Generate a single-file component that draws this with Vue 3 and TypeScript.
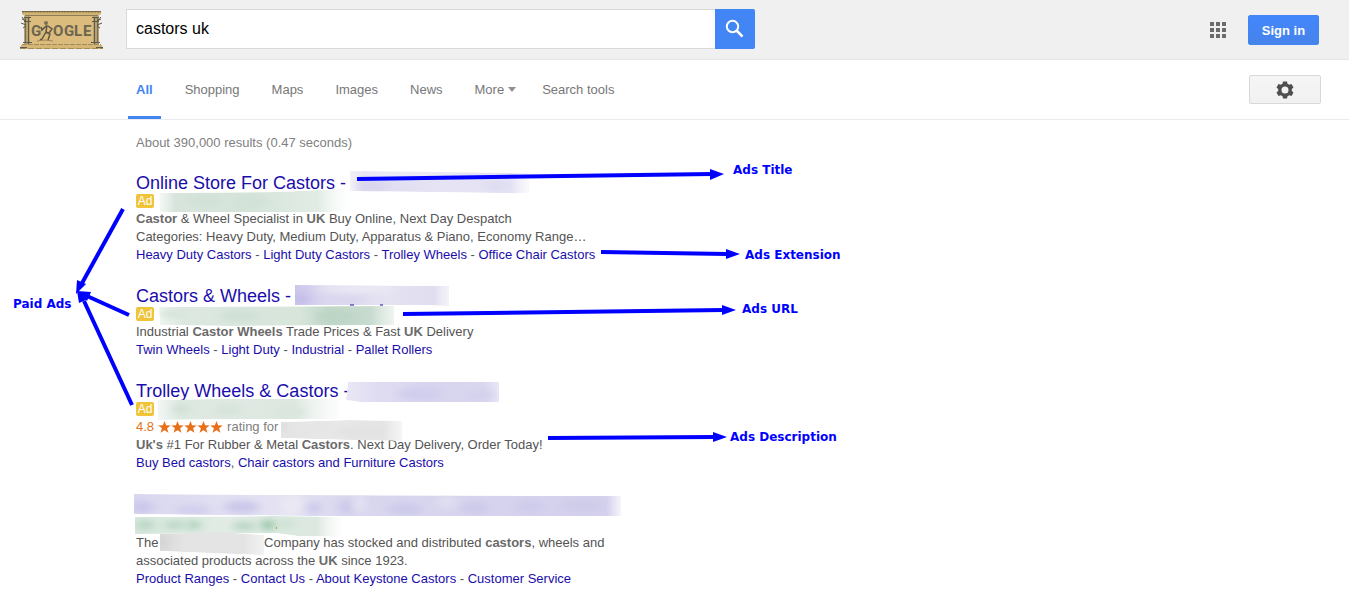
<script setup lang="ts">
import { ref } from 'vue'

interface Piece { text: string; bold?: boolean }
interface Result {
  title: string
  rating?: string
  lines: Piece[][]
  links: string[]
  separator: string
}
interface Stop { at: number; color: string; opacity?: number }
interface Blob { x: number; y: number; rx: number; ry: number; color: string }
interface Smudge { id: string; points: string; stops: Stop[]; blobs: Blob[] }
interface Arrow { x1: number; y1: number; x2: number; y2: number; head: string }

const query = ref('castors uk')
const tabs = ['All', 'Shopping', 'Maps', 'Images', 'News']

const results: Result[] = [
  {
    title: 'Online Store For Castors -',
    lines: [
      [{ text: 'Castor', bold: true }, { text: ' & Wheel Specialist in ' }, { text: 'UK', bold: true }, { text: ' Buy Online, Next Day Despatch' }],
      [{ text: 'Categories: Heavy Duty, Medium Duty, Apparatus & Piano, Economy Range…' }],
    ],
    links: ['Heavy Duty Castors', 'Light Duty Castors', 'Trolley Wheels', 'Office Chair Castors'],
    separator: ' - ',
  },
  {
    title: 'Castors & Wheels -',
    lines: [
      [{ text: 'Industrial ' }, { text: 'Castor Wheels', bold: true }, { text: ' Trade Prices & Fast ' }, { text: 'UK', bold: true }, { text: ' Delivery' }],
    ],
    links: ['Twin Wheels', 'Light Duty', 'Industrial', 'Pallet Rollers'],
    separator: ' - ',
  },
  {
    title: 'Trolley Wheels & Castors -',
    rating: '4.8',
    lines: [
      [{ text: "Uk's", bold: true }, { text: ' #1 For Rubber & Metal ' }, { text: 'Castors', bold: true }, { text: '. Next Day Delivery, Order Today!' }],
    ],
    links: ['Buy Bed castors', 'Chair castors and Furniture Castors'],
    separator: ', ',
  },
]

const organicLinks = ['Product Ranges', 'Contact Us', 'About Keystone Castors', 'Customer Service']

const smudges: Smudge[] = [
  {
    id: 'title-1', points: '350,171 440,172 529,173 529,193 500,193 350,191',
    stops: [{ at: 0, color: '#e9e8f2', opacity: 0.6 }, { at: 8, color: '#dedbf0' }, { at: 55, color: '#e6e4f4' }, { at: 90, color: '#e4e2f3' }, { at: 100, color: '#f4f3fa', opacity: 0.5 }],
    blobs: [{ x: 372, y: 186, rx: 14, ry: 6, color: '#d8d5ee' }, { x: 496, y: 186, rx: 12, ry: 5, color: '#dddbf1' }, { x: 400, y: 174, rx: 60, ry: 3, color: '#f1f0f7' }],
  },
  {
    id: 'url-1', points: '159,193 280,192 355,188 358,209 330,212 160,212',
    stops: [{ at: 0, color: '#dfe9e2', opacity: 0.3 }, { at: 8, color: '#d8e4dc' }, { at: 45, color: '#d5e4da' }, { at: 80, color: '#e2ece5' }, { at: 100, color: '#ffffff', opacity: 0 }],
    blobs: [{ x: 205, y: 201, rx: 16, ry: 6, color: '#d0e1d6' }, { x: 250, y: 202, rx: 18, ry: 7, color: '#d2e2d8' }],
  },
  {
    id: 'title-2', points: '295,285 449,286 449,306 424,305 295,305',
    stops: [{ at: 0, color: '#cdc7ec' }, { at: 20, color: '#dad6f0' }, { at: 60, color: '#e5e3f2' }, { at: 90, color: '#dfddef' }, { at: 100, color: '#eeedf7', opacity: 0.7 }],
    blobs: [{ x: 300, y: 299, rx: 10, ry: 6, color: '#c5bee8' }, { x: 347, y: 300, rx: 18, ry: 5, color: '#dad7f0' }, { x: 355, y: 289, rx: 40, ry: 3, color: '#efeef5' }],
  },
  {
    id: 'url-2', points: '159,307 394,306 394,325 230,326 160,325',
    stops: [{ at: 0, color: '#e2ece5', opacity: 0.5 }, { at: 10, color: '#dce8e0' }, { at: 60, color: '#d7e5db' }, { at: 72, color: '#c1d8c9' }, { at: 90, color: '#c7dbce' }, { at: 100, color: '#e3ece6', opacity: 0.6 }],
    blobs: [{ x: 172, y: 314, rx: 12, ry: 4, color: '#d3e3d8' }, { x: 240, y: 316, rx: 20, ry: 6, color: '#cfe0d5' }, { x: 336, y: 317, rx: 20, ry: 7, color: '#bdd5c6' }],
  },
  {
    id: 'title-3', points: '348,382 499,382 499,402 360,402 346,400',
    stops: [{ at: 0, color: '#e7e5f4', opacity: 0.9 }, { at: 20, color: '#dfdcf2' }, { at: 55, color: '#d8d5ef' }, { at: 90, color: '#d9d7ef' }, { at: 100, color: '#e8e7f5' }],
    blobs: [{ x: 420, y: 394, rx: 22, ry: 6, color: '#d0cced' }, { x: 480, y: 395, rx: 14, ry: 6, color: '#d3d1ec' }],
  },
  {
    id: 'url-3', points: '158,400 218,399 339,399 339,419 236,419 158,420',
    stops: [{ at: 0, color: '#eaf0ec', opacity: 0.6 }, { at: 12, color: '#dce8e0' }, { at: 40, color: '#e0e9e3' }, { at: 75, color: '#dde7e0' }, { at: 100, color: '#f6f9f7', opacity: 0.4 }],
    blobs: [{ x: 180, y: 409, rx: 10, ry: 3, color: '#cadecf' }, { x: 228, y: 410, rx: 14, ry: 6, color: '#d6e4da' }, { x: 290, y: 412, rx: 16, ry: 5, color: '#d9e5dd' }],
  },
  {
    id: 'name-3', points: '281,422 350,420 402,421 402,441 350,440 281,438',
    stops: [{ at: 0, color: '#e4e4e4' }, { at: 50, color: '#e8e8e8' }, { at: 85, color: '#e5e5e5' }, { at: 100, color: '#f6f6f6' }],
    blobs: [{ x: 282, y: 426, rx: 3, ry: 4, color: '#d4d4d4' }, { x: 360, y: 432, rx: 24, ry: 6, color: '#e2e2e2' }],
  },
  {
    id: 'title-4', points: '134,494 300,495 621,496 621,516 310,516 134,514',
    stops: [{ at: 0, color: '#d9d7f0' }, { at: 15, color: '#e0def1' }, { at: 30, color: '#e4e2f2' }, { at: 45, color: '#d9d7ee' }, { at: 75, color: '#d6d3ee' }, { at: 97, color: '#d4d1ec' }, { at: 100, color: '#f6f5fb' }],
    blobs: [
      { x: 142, y: 507, rx: 12, ry: 6, color: '#cbc6eb' }, { x: 193, y: 510, rx: 18, ry: 5, color: '#d1cdec' }, { x: 242, y: 507, rx: 18, ry: 6, color: '#cac6ea' },
      { x: 292, y: 505, rx: 11, ry: 11, color: '#eae9f3' }, { x: 314, y: 508, rx: 7, ry: 6, color: '#cbc8ea' }, { x: 346, y: 507, rx: 8, ry: 8, color: '#cdcaeb' },
      { x: 360, y: 503, rx: 5, ry: 10, color: '#e5e3f2' }, { x: 405, y: 509, rx: 17, ry: 5, color: '#cac7ea' }, { x: 447, y: 502, rx: 10, ry: 6, color: '#e1dff0' },
      { x: 475, y: 508, rx: 14, ry: 5, color: '#cbc7e9' }, { x: 530, y: 507, rx: 15, ry: 6, color: '#cecaeb' }, { x: 582, y: 506, rx: 22, ry: 7, color: '#cecce9' },
    ],
  },
  {
    id: 'url-4', points: '135,517 275,516 349,517 345,536 298,536 275,533 135,534',
    stops: [{ at: 0, color: '#d8e8dd' }, { at: 25, color: '#dceae1' }, { at: 45, color: '#e3ece6' }, { at: 64, color: '#dbe9e0' }, { at: 85, color: '#dce8e0' }, { at: 100, color: '#ffffff', opacity: 0 }],
    blobs: [{ x: 145, y: 525, rx: 9, ry: 4, color: '#b2d2bd' }, { x: 175, y: 525, rx: 11, ry: 3, color: '#b0d2bc' }, { x: 194, y: 525, rx: 7, ry: 4, color: '#aacfb8' }, { x: 244, y: 526, rx: 12, ry: 4, color: '#b6d4c1' }, { x: 268, y: 525, rx: 7, ry: 5, color: '#98c5a7' }, { x: 286, y: 524, rx: 7, ry: 4, color: '#c9dfd0' }],
  },
  {
    id: 'name-4', points: '160,534 220,532 264,535 264,555 234,554 160,551',
    stops: [{ at: 0, color: '#d9d9d9' }, { at: 25, color: '#e4e4e4' }, { at: 80, color: '#e4e4e4' }, { at: 100, color: '#f2f2f2' }],
    blobs: [{ x: 163, y: 542, rx: 4, ry: 5, color: '#d0d0d0' }],
  },
]

const arrows: Arrow[] = [
  { x1: 357, y1: 179, x2: 712, y2: 174, head: '710,169 724,174 710,180' },
  { x1: 601, y1: 252, x2: 727, y2: 254, head: '726,249 740,254 726,259' },
  { x1: 403, y1: 314, x2: 724, y2: 310, head: '722,305 736,310 722,315' },
  { x1: 548, y1: 438, x2: 714, y2: 437, head: '713,432 727,437 713,442' },
  { x1: 123, y1: 209, x2: 81, y2: 285, head: '76,294 77,280 86,284' },
  { x1: 129, y1: 315, x2: 87, y2: 296, head: '77,291 91,292 87,301' },
  { x1: 132, y1: 405, x2: 84, y2: 301, head: '77,291 79,303 88,299' },
]

const labels = [
  { text: 'Paid Ads', x: 13, y: 308 },
  { text: 'Ads Title', x: 733, y: 174 },
  { text: 'Ads Extension', x: 745, y: 259 },
  { text: 'Ads URL', x: 742, y: 313 },
  { text: 'Ads Description', x: 730, y: 441 },
]
</script>

<template>
  <div class="page">
    <header class="topbar">
      <a class="logo" href="#" aria-label="Google">
        <svg width="83" height="40" viewBox="0 0 83 40" aria-hidden="true">
          <rect x="5" y="5" width="73" height="31" fill="#dcbc7c" />
          <path d="M2 1h79v3l-3 2H5L2 4z" fill="#d3b373" />
          <path d="M2 1.500h79" stroke="#7b6c48" />
          <path d="M2 2.500h79" stroke="#a8935f" stroke-dasharray="2 1" />
          <path d="M5 5.500h73" stroke="#8f7d55" />
          <rect x="4" y="6" width="6" height="28" fill="#b9a070" />
          <rect x="73" y="6" width="6" height="28" fill="#b9a070" />
          <path d="M5.500 8v25M77.500 8v25" stroke="#77705a" />
          <path d="M8.500 8v26M74.500 8v26" stroke="#5d5a49" />
          <path d="M4 7.500h7M4 11.500h7M72 7.500h7M72 11.500h7M3 32.500h9M71 32.500h9" stroke="#5d5a49" />
          <path d="M2 9l4 2M1 13l5 2M3 18l3-2M2 7l4 5M81 9l-4 2M82 13l-5 2M80 18l-3-2M81 7l-4 5" stroke="#585948" />
          <path d="M1 35h81l1 4H0z" fill="#d6b675" />
          <path d="M2 34.500h79" stroke="#a08b5c" stroke-dasharray="5 1" />
          <path d="M0 38.500h83" stroke="#a08b5c" stroke-dasharray="6 2" />
          <path d="M0 37.500h7M76 37.500h7" stroke="#5d5a49" />
          <g font-family="Roboto, Liberation Sans, sans-serif" font-size="15" font-weight="700" fill="#6b6551">
            <text x="11" y="26">G</text>
            <text x="33" y="26">O</text>
            <text x="44" y="26">G</text>
            <text x="54" y="26">L</text>
            <text x="63" y="26">E</text>
          </g>
          <circle cx="26" cy="13" r="2" fill="#7a7055" />
          <path d="M27 15l-1 7 4 2-2 6M26 22l-4 7-2 1M26 16l-4 4-1-3M28 16l4 3-3 4" fill="none" stroke="#5b5645" stroke-width="1.500" />
          <path d="M17 31q8-2 16 0" fill="none" stroke="#9b865a" />
        </svg>
      </a>
      <form class="search" role="search" @submit.prevent>
        <input v-model="query" type="text" aria-label="Search" />
        <button type="submit" aria-label="Search">
          <svg width="20" height="20" viewBox="0 0 20 20" aria-hidden="true">
            <circle cx="7.500" cy="7.500" r="5.700" fill="none" stroke="#fff" stroke-width="2" />
            <path d="M11.500 11.500l6 6" stroke="#fff" stroke-width="2.500" />
          </svg>
        </button>
      </form>
      <div class="account">
        <button class="apps" type="button" aria-label="Apps">
          <svg width="16" height="16" viewBox="0 0 16 16" aria-hidden="true">
            <path d="M0 0h4v4H0zM6 0h4v4H6zM12 0h4v4h-4zM0 6h4v4H0zM6 6h4v4H6zM12 6h4v4h-4zM0 12h4v4H0zM6 12h4v4H6zM12 12h4v4h-4z" fill="#6b6b6b" />
          </svg>
        </button>
        <a class="signin" href="#">Sign in</a>
      </div>
    </header>

    <nav class="tabs" aria-label="Search categories">
      <a v-for="(tab, i) in tabs" :key="tab" href="#" class="tab" :class="{ active: i === 0 }">{{ tab }}</a>
      <button type="button" class="tab more">More<span class="caret"></span></button>
      <button type="button" class="tab">Search tools</button>
      <button type="button" class="settings" aria-label="Settings">
        <svg width="18" height="18" viewBox="0 0 18 18" aria-hidden="true">
          <path fill="#4f4f4f" fill-rule="evenodd" d="M7 0.500h4l.5 2.300 1.700 1 2.300-.8 2 3.500-1.700 1.600v1.900l1.700 1.600-2 3.500-2.300-.8-1.700 1-.5 2.200H7l-.5-2.200-1.700-1-2.300.8-2-3.500L2.200 10V8.100L.5 6.500l2-3.500 2.300.8 1.700-1zM9 5.500a3.500 3.500 0 1 0 0 7 3.500 3.500 0 0 0 0-7z" />
        </svg>
      </button>
    </nav>

    <main>
      <p class="stats">About 390,000 results (0.47 seconds)</p>

      <article v-for="r in results" :key="r.title" class="result">
        <h3><a href="#">{{ r.title }}</a></h3>
        <div class="source"><span class="badge">Ad</span></div>
        <div v-if="r.rating" class="rating">
          <span class="score">{{ r.rating }}</span>
          <svg class="stars" width="65" height="12" viewBox="0 0 65 12" role="img" aria-label="5 stars">
            <path v-for="n in 5" :key="n" :transform="`translate(${(n - 1) * 13} 0)`" d="M6.500 0l1.600 4.300 4.600.1-3.600 2.900 1.300 4.500-3.900-2.600-3.900 2.600 1.300-4.500L.3 4.400l4.600-.1z" fill="#e7711b" />
          </svg>
          <span>rating for</span>
        </div>
        <p v-for="(line, i) in r.lines" :key="i">
          <template v-for="(piece, j) in line" :key="j"><b v-if="piece.bold">{{ piece.text }}</b><template v-else>{{ piece.text }}</template></template>
        </p>
        <p class="links">
          <template v-for="(link, i) in r.links" :key="link"><template v-if="i">{{ r.separator }}</template><a href="#">{{ link }}</a></template>
        </p>
      </article>

      <article class="result organic">
        <h3></h3>
        <div class="source"></div>
        <p>The <span class="hidden-name"></span>Company has stocked and distributed <b>castors</b>, wheels and</p>
        <p>associated products across the <b>UK</b> since 1923.</p>
        <p class="links">
          <template v-for="(link, i) in organicLinks" :key="link"><template v-if="i"> - </template><a href="#">{{ link }}</a></template>
        </p>
      </article>
    </main>

    <svg class="overlay" width="860" height="600" viewBox="0 0 860 600">
      <defs>
        <filter id="soft" x="-60%" y="-100%" width="220%" height="300%"><feGaussianBlur stdDeviation="5 3" /></filter>
        <template v-for="s in smudges" :key="s.id">
          <linearGradient :id="`fill-${s.id}`">
            <stop v-for="stop in s.stops" :key="stop.at" :offset="`${stop.at}%`" :stop-color="stop.color" :stop-opacity="stop.opacity ?? 1" />
          </linearGradient>
          <clipPath :id="`clip-${s.id}`"><polygon :points="s.points" /></clipPath>
        </template>
      </defs>
      <g v-for="s in smudges" :key="s.id" :clip-path="`url(#clip-${s.id})`">
        <polygon :points="s.points" :fill="`url(#fill-${s.id})`" />
        <ellipse v-for="(b, i) in s.blobs" :key="i" :cx="b.x" :cy="b.y" :rx="b.rx" :ry="b.ry" :fill="b.color" filter="url(#soft)" />
      </g>
      <path d="M350 305h4M380 305h3" stroke="#1a0dab" />
      <path d="M276 528h1" stroke="#b9a44a" stroke-width="2" />
      <g v-for="a in arrows" :key="a.head" class="arrow">
        <line :x1="a.x1" :y1="a.y1" :x2="a.x2" :y2="a.y2" />
        <polygon :points="a.head" />
      </g>
      <text v-for="l in labels" :key="l.text" class="label" :x="l.x" :y="l.y">{{ l.text }}</text>
    </svg>
  </div>
</template>

<style>
body { background: #fff; }
</style>

<style scoped>
.page {
  position: relative;
  font-family: "Liberation Sans", Arial, sans-serif;
  font-size: 13px;
  line-height: 18px;
  color: #545454;
  padding-bottom: 22px;
}
a { color: #1a0dab; text-decoration: none; }
button { font: inherit; cursor: pointer; }
.topbar {
  display: flex;
  align-items: center;
  height: 59px;
  padding: 0 30px 0 20px;
  background: #f0f0f0;
  border-bottom: 1px solid #e5e5e5;
}
.logo { display: block; width: 83px; height: 40px; margin-right: 23px; }
.logo svg { display: block; }
.search { display: flex; flex: 0 1 629px; height: 40px; margin-bottom: 2px; }
.search input {
  flex: 1;
  min-width: 0;
  box-sizing: border-box;
  border: 1px solid #d9d9d9;
  border-right: 0;
  padding: 0 9px;
  font: 16px "Liberation Sans", Arial, sans-serif;
  color: #000;
  background: #fff;
  outline: 0;
}
.search button {
  display: flex;
  align-items: center;
  justify-content: center;
  width: 40px;
  padding: 0;
  border: 0;
  border-radius: 0 2px 2px 0;
  background: #4285f4;
}
.account { display: flex; align-items: center; gap: 22px; margin-left: auto; }
.apps { display: flex; padding: 0; border: 0; background: none; }
.signin {
  box-sizing: border-box;
  width: 71px;
  height: 30px;
  border: 1px solid #4285f4;
  border-radius: 2px;
  background: linear-gradient(#4387fd, #4683ea);
  color: #fff;
  font-weight: 700;
  line-height: 29px;
  text-align: center;
}
.tabs {
  display: flex;
  align-items: center;
  gap: 16px;
  height: 59px;
  padding: 0 28px 0 128px;
  border-bottom: 1px solid #ebebeb;
}
.tab {
  box-sizing: border-box;
  height: 59px;
  padding: 0 8px;
  border: 0;
  border-bottom: 3px solid transparent;
  background: none;
  color: #777;
  line-height: 59px;
  white-space: nowrap;
}
.tab.active { border-bottom-color: #4285f4; color: #4285f4; font-weight: 700; }
button.tab { border-bottom: 0; }
.more { display: flex; align-items: center; gap: 4px; padding-right: 2px; }
.caret { border: 4px solid transparent; border-top: 5px solid #909090; border-bottom: 0; }
.settings {
  display: flex;
  align-items: center;
  justify-content: center;
  width: 72px;
  height: 29px;
  margin-left: auto;
  padding: 0;
  border: 1px solid #d8d8d8;
  border-radius: 2px;
  background: linear-gradient(#f5f5f5, #f1f1f1);
}
main {
  display: flex;
  flex-direction: column;
  gap: 23px;
  max-width: 520px;
  padding: 14px 0 0 136px;
}
p, h3 { margin: 0; }
.stats { color: #808080; line-height: 17px; }
.result { white-space: nowrap; }
h3 { height: 18px; font-size: 18px; font-weight: 400; line-height: 18px; }
.source { display: flex; align-items: center; height: 18px; }
.badge {
  width: 18px;
  height: 14px;
  border-radius: 2px;
  background: #efc439;
  color: #fff;
  font-size: 12px;
  line-height: 14px;
  text-align: center;
}
b { color: #6a6a6a; }
.rating { display: flex; align-items: center; gap: 4px; color: #808080; }
.score { color: #e7711b; }
.organic h3 { height: 21px; }
.hidden-name { display: inline-block; width: 102px; }
.overlay { position: absolute; top: 0; left: 0; pointer-events: none; }
.arrow line { stroke: #00f; stroke-width: 4px; }
.arrow polygon { fill: #00f; }
.label { fill: #00f; font: 700 12px "DejaVu Sans", Verdana, sans-serif; }
</style>
